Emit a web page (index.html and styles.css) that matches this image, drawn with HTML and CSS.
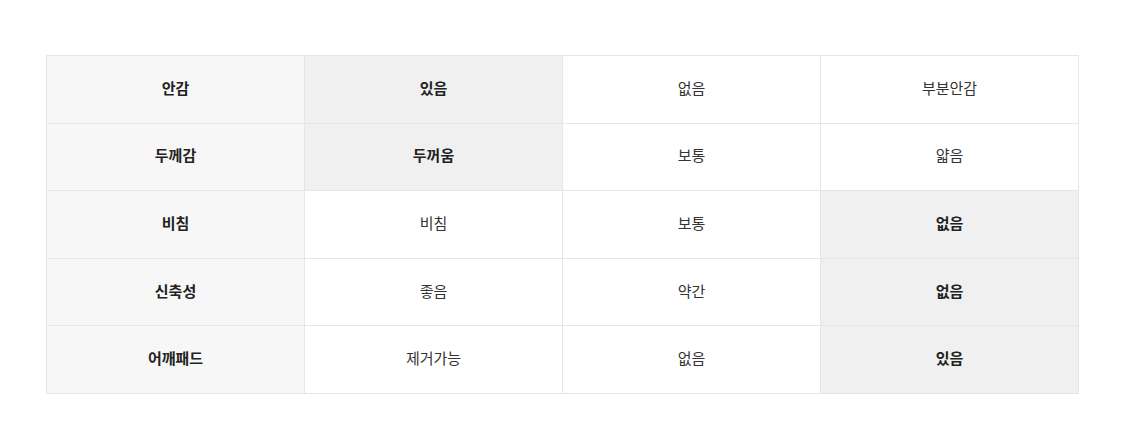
FILE: index.html
```html
<!DOCTYPE html>
<html lang="ko">
<head>
<meta charset="utf-8">
<link rel="stylesheet" href="styles.css">
</head>
<body>
<table class="spec">
  <tr>
    <th>안감</th>
    <td class="on">있음</td>
    <td>없음</td>
    <td>부분안감</td>
  </tr>
  <tr>
    <th>두께감</th>
    <td class="on">두꺼움</td>
    <td>보통</td>
    <td>얇음</td>
  </tr>
  <tr>
    <th>비침</th>
    <td>비침</td>
    <td>보통</td>
    <td class="on">없음</td>
  </tr>
  <tr>
    <th>신축성</th>
    <td>좋음</td>
    <td>약간</td>
    <td class="on">없음</td>
  </tr>
  <tr>
    <th>어깨패드</th>
    <td>제거가능</td>
    <td>없음</td>
    <td class="on">있음</td>
  </tr>
</table>
</body>
</html>
```
FILE: styles.css
```css
html, body {
  margin: 0;
  background: #fff;
}
body {
  padding: 55px 46px;
  font-family: "Noto Sans CJK KR", "Noto Sans", sans-serif;
}
.spec {
  width: 1033px;
  border-collapse: collapse;
  table-layout: fixed;
}
.spec th, .spec td {
  border: 1px solid #e6e6e6;
  height: 63.6px;
  padding: 0 0 3px;
  text-align: center;
  vertical-align: middle;
  font-size: 15px;
  line-height: 20px;
  color: #333;
  font-weight: 400;
}
.spec th {
  background: #f7f7f7;
  font-weight: 700;
  color: #222;
}
.spec td.on {
  background: #f0f0f0;
  font-weight: 700;
  color: #222;
}
```
